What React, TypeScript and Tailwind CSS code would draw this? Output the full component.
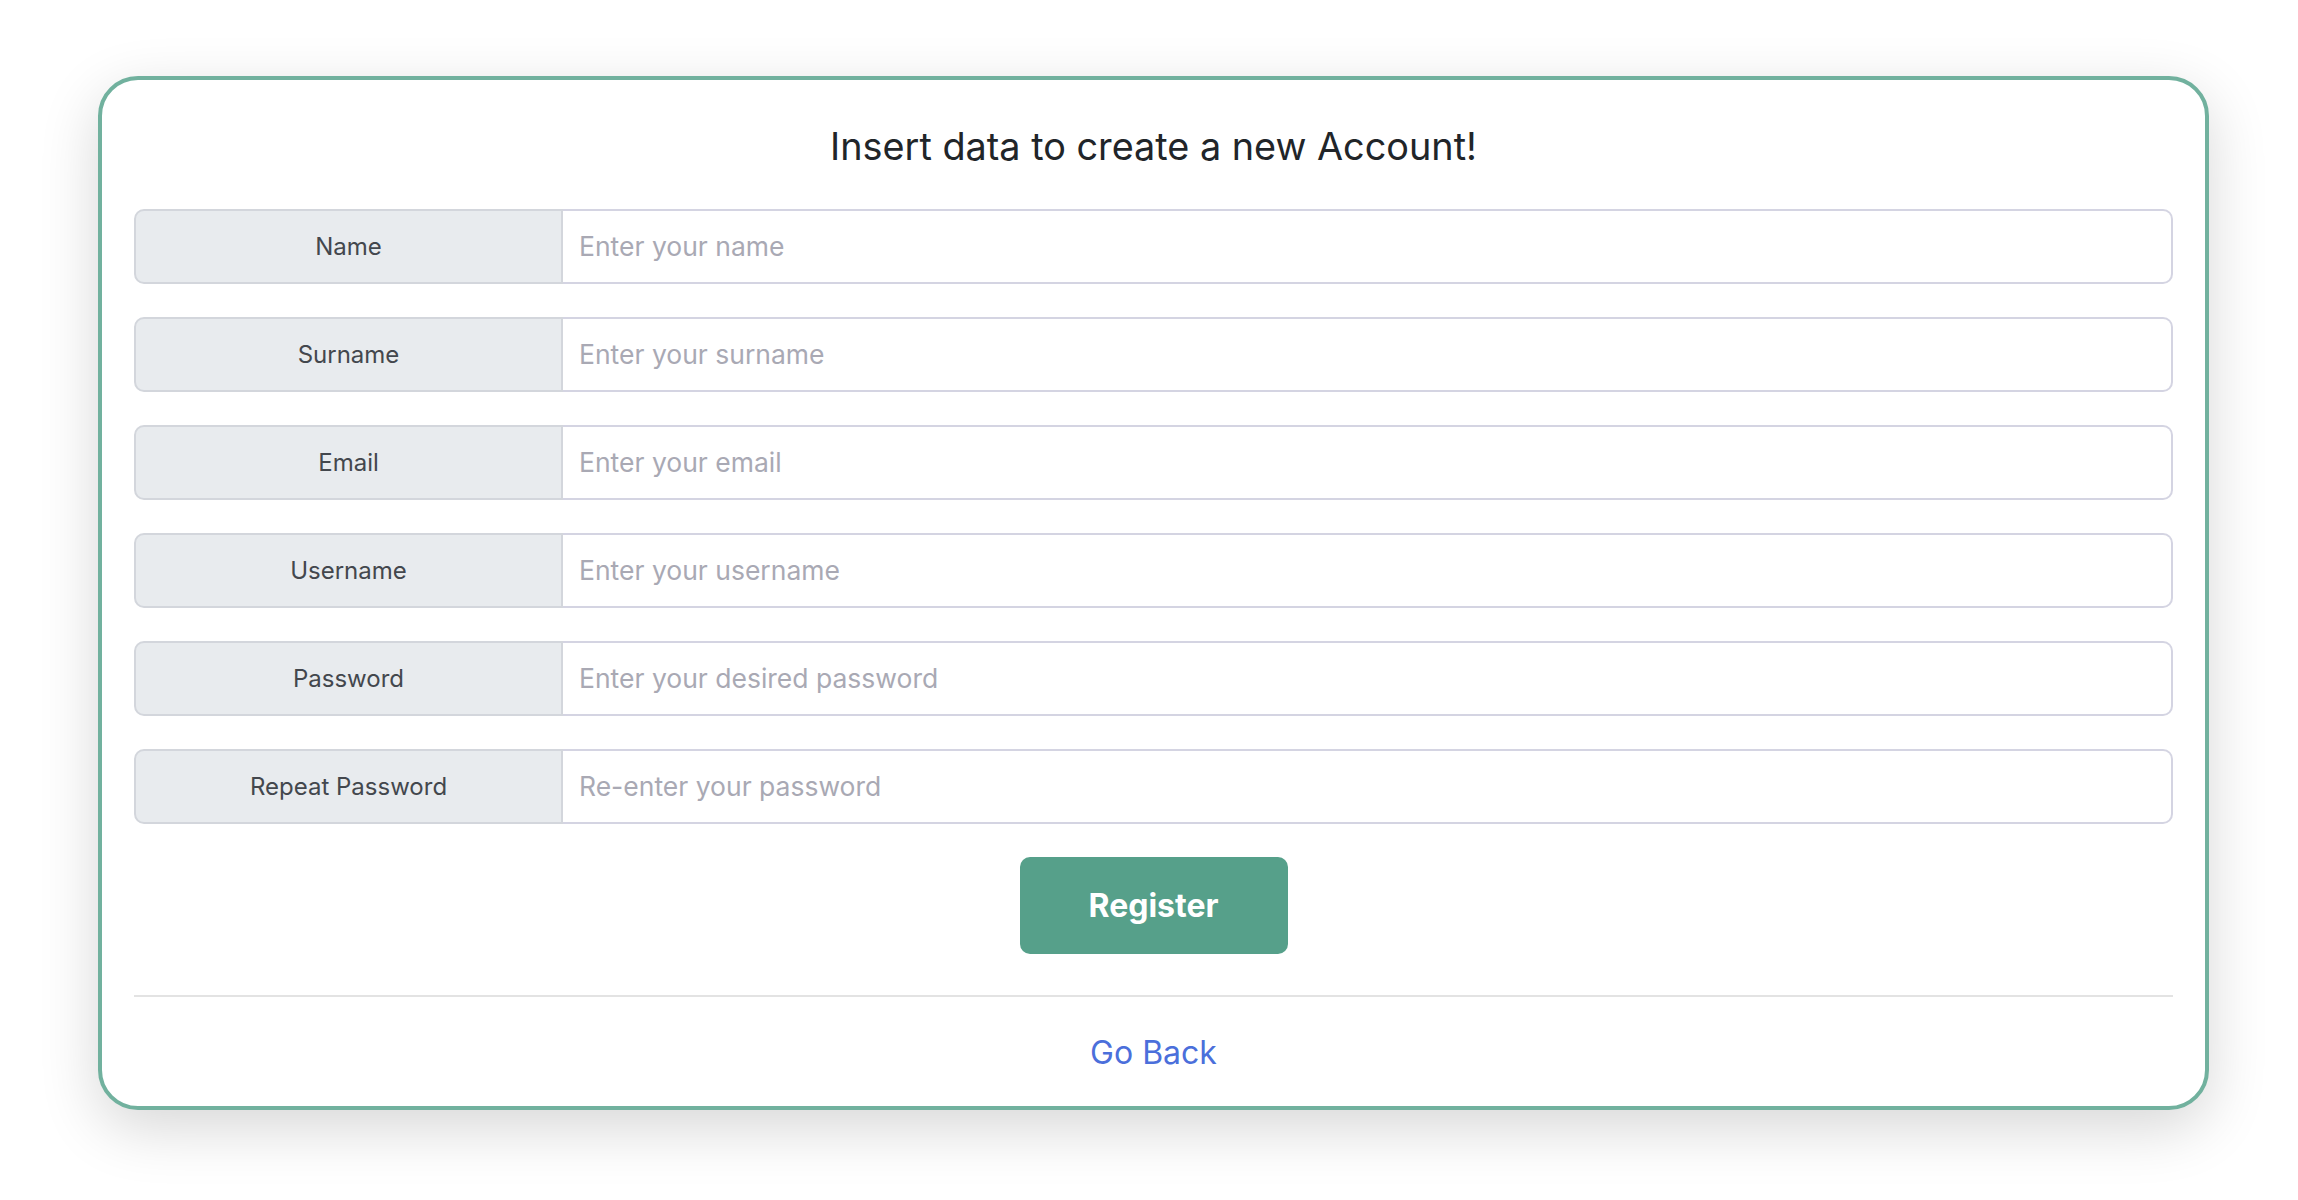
import React from 'react';

const fields = [
  { label: 'Name', placeholder: 'Enter your name', type: 'text' },
  { label: 'Surname', placeholder: 'Enter your surname', type: 'text' },
  { label: 'Email', placeholder: 'Enter your email', type: 'email' },
  { label: 'Username', placeholder: 'Enter your username', type: 'text' },
  { label: 'Password', placeholder: 'Enter your desired password', type: 'password' },
  { label: 'Repeat Password', placeholder: 'Re-enter your password', type: 'password' },
];

const App = () => {
  return (
    <div
      className="min-h-screen bg-white pt-[76px] pl-[98px]"
      style={{ fontFamily: 'Inter, "Noto Sans", sans-serif' }}
    >
      <div className="flex h-[1034px] w-[2111px] flex-col rounded-[40px] border-4 border-[#71b19e] bg-white px-8 shadow-[0_18px_60px_rgba(0,0,0,0.16)]">
        <h1 className="pt-[43px] text-center text-[37.8px] leading-[46px] font-normal text-[#212529]">
          Insert data to create a new Account!
        </h1>

        <form className="mt-[40px] flex flex-col">
          <div className="flex flex-col gap-[33px]">
            {fields.map((field) => (
              <div key={field.label} className="flex h-[75px] w-full">
                <span className="flex w-[429px] shrink-0 items-center justify-center rounded-l-[10px] border-2 border-[#d3d6dc] bg-[#e8ebee] text-[24px] text-[#43474d]">
                  {field.label}
                </span>
                <input
                  type={field.type}
                  placeholder={field.placeholder}
                  className="min-w-0 flex-1 rounded-r-[10px] border-2 border-l-0 border-[#d4d4e2] bg-white px-4 text-[26.5px] text-[#212529] outline-none placeholder:text-[#a9a9b4]"
                />
              </div>
            ))}
          </div>

          <button
            type="button"
            className="mx-auto mt-[33px] h-[97px] w-[268px] rounded-[10px] bg-[#56a08a] text-[32px] font-bold text-white"
          >
            Register
          </button>
        </form>

        <hr className="mt-[41px] border-t-2 border-[#e3e3e3]" />

        <div className="mt-[36px] text-center">
          <a href="#" className="text-[32px] leading-[40px] text-[#4b6fdb]">
            Go Back
          </a>
        </div>
      </div>
    </div>
  );
};

export default App;
